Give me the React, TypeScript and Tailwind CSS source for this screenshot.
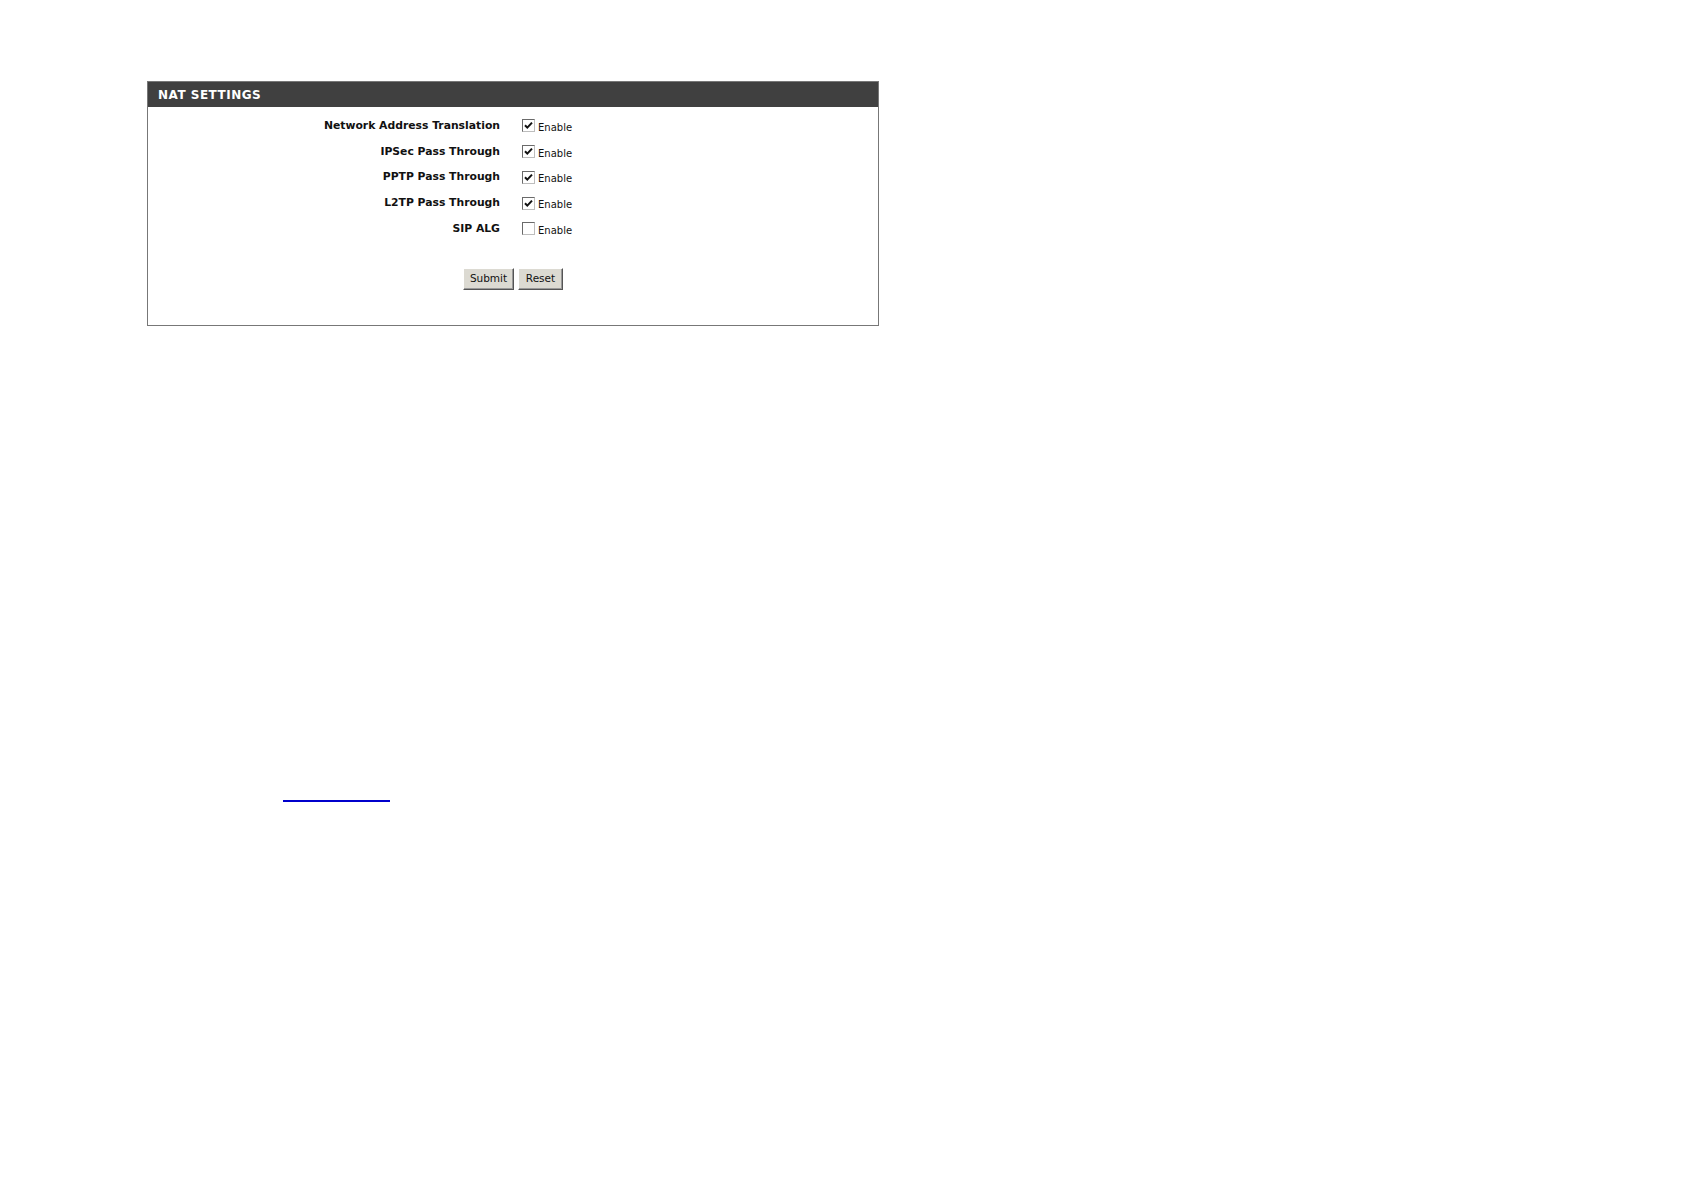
import React from "react";

const rows = [
  { label: "Network Address Translation", checked: true },
  { label: "IPSec Pass Through", checked: true },
  { label: "PPTP Pass Through", checked: true },
  { label: "L2TP Pass Through", checked: true },
  { label: "SIP ALG", checked: false },
];

function Box({ checked }: { checked: boolean }) {
  return (
    <span className="relative flex h-[13px] w-[13px] shrink-0 items-center justify-center border border-t-[#6a6a6a] border-l-[#6a6a6a] border-b-[#bdbdbd] border-r-[#bdbdbd] bg-white">
      {checked && (
        <svg width="9" height="9" viewBox="0 0 9 9" className="block">
          <path d="M1 4.2 L3.3 6.6 L8 1.6" fill="none" stroke="#111" strokeWidth="2" />
        </svg>
      )}
    </span>
  );
}

function Btn({ children, w }: { children: React.ReactNode; w: string }) {
  return (
    <button
      type="button"
      className={`${w} h-[22px] border border-t-white border-l-white border-b-[#555] border-r-[#555] bg-[#dcdad2] text-[10.5px] text-[#111] shadow-[inset_-1px_-1px_0_#999] font-['DejaVu_Sans',sans-serif]`}
    >
      {children}
    </button>
  );
}

export default function App() {
  return (
    <div className="min-h-[1190px] bg-white pl-[147px] pt-[81px] font-['DejaVu_Sans',sans-serif]">
      <section className="w-[732px] border border-[#777] bg-white">
        <div className="flex h-[25px] items-center bg-[#404040] pl-[10px] text-[12px] font-bold tracking-[0.5px] text-white">
          NAT SETTINGS
        </div>
        <div className="pt-[6px]">
          {rows.map((r) => (
            <div key={r.label} className="flex h-[25.75px] items-center">
              <div className="w-[352px] text-right text-[10.8px] font-bold text-[#111]">
                {r.label}
              </div>
              <label className="ml-[22px] flex items-center">
                <Box checked={r.checked} />
                <span className="ml-[3px] mt-[3px] text-[10px] text-[#111]">Enable</span>
              </label>
            </div>
          ))}
        </div>
        <div className="flex justify-center gap-[4px] pt-[26px] pb-[35px]">
          <Btn w="w-[51px]">Submit</Btn>
          <Btn w="w-[45px]">Reset</Btn>
        </div>
      </section>
      <div className="pl-[136px] pt-[474px]">
        <a href="#" className="block h-[2px] w-[107px] bg-[#0000cc]" aria-label="link"></a>
      </div>
    </div>
  );
}
